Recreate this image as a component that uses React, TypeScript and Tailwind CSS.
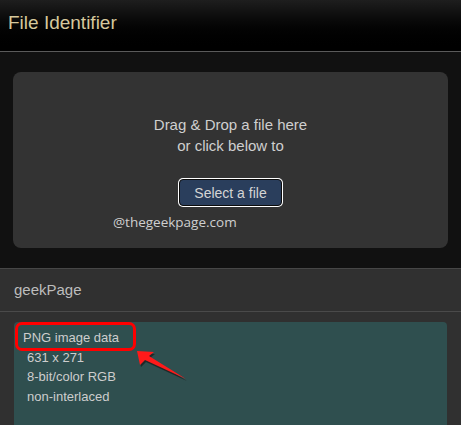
export default function App() {
  const lines = ["631 x 271", "8-bit/color RGB", "non-interlaced"]

  return (
    <div className="relative h-[425px] w-[461px] overflow-hidden bg-[#111111] font-['Liberation_Sans',Arial,sans-serif]">
      {/* header */}
      <div className="flex h-[52px] items-start border-b border-[#5a5a5a] bg-gradient-to-b from-[#1e1e1e] to-[#000000] px-2 pt-[11px]">
        <h1 className="text-[19px] leading-[24px] text-[#d6c89c]">File Identifier</h1>
      </div>

      {/* drop zone */}
      <div className="px-[13px] pt-5 pb-5">
        <div className="flex h-[176px] flex-col items-center rounded-lg bg-[#333333] pt-[42px]">
          <p className="text-center text-[15px] leading-[21px] text-[#cfcfcf]">
            Drag &amp; Drop a file here
            <br />
            or click below to
          </p>
          <button className="mt-[23px] h-[27px] rounded border border-[#0c0c0c] bg-[#2a3e5c] px-[14px] text-[14px] leading-[20px] text-[#d5d5d5] ring-1 ring-white">
            Select a file
          </button>
          <div className="mt-[4px] w-full pl-[100px] font-['Open_Sans',sans-serif] text-[13.5px] leading-[24px] text-[#cfcfcf]">
            @thegeekpage.com
          </div>
        </div>
      </div>

      {/* result section */}
      <div className="h-[160px] border-t border-[#474747] bg-[#303030]">
        <div className="flex h-[43px] items-center border-b border-[#4a4a4a] px-[14px] text-[15px] text-[#bdbdbd]">
          geekPage
        </div>
        <div className="mx-[14px] mt-[10px] h-[110px] rounded-sm bg-[#2f4f4f] px-[9px] pt-[6px] text-[13px] leading-[19.5px] text-[#cdcdcd]">
          <div>PNG image data</div>
          {lines.map((l) => (
            <div key={l} className="pl-1">
              {l}
            </div>
          ))}
        </div>
      </div>

      {/* annotation */}
      <div className="pointer-events-none absolute left-[15px] top-[322px] h-[29px] w-[121px] rounded-[7px] border-[3px] border-[#ff0000]" />
      <svg className="pointer-events-none absolute left-0 top-0" width="461" height="425">
        <polygon
          points="138,353 141,367 146,362 187,381 150,358 155,354"
          fill="#1a1a1a"
          opacity="0.7"
        />
        <polygon points="137,351 140,365 145,360 186,379 149,356 154,352" fill="#ff1a1a" />
      </svg>
    </div>
  )
}
